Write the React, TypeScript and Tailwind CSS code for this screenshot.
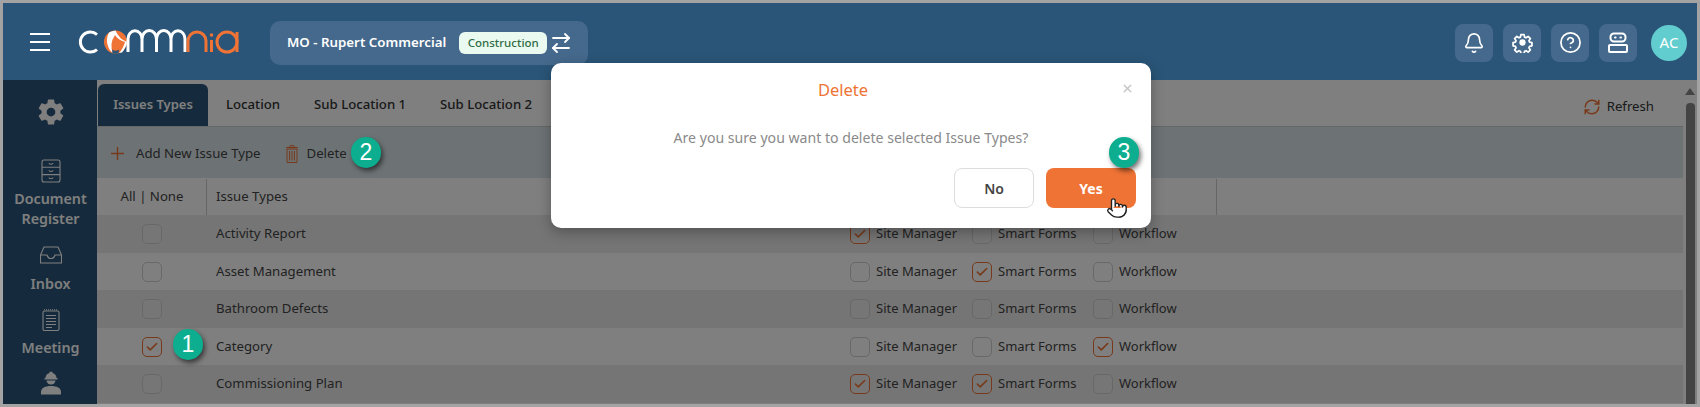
import React from "react";
import { Bell, CircleHelp, ArrowRightLeft, Pointer, Check, RefreshCw, X } from "lucide-react";
import { IoSettingsSharp } from "react-icons/io5";

function Logo() {
  return (
    <svg width="180" height="50" viewBox="0 0 180 50" className="shrink-0" fill="none" strokeWidth="3">
      <path d="M37 15.5 A10 10 0 1 0 37 30.5" stroke="#fff" />
      <circle cx="55.5" cy="23" r="11.5" fill="#ee7335" />
      <path d="M49 13.5 Q45.5 20 48 27 Q49.5 32 53 34 Q49 25 55 16 Q58 21 65 23 Q63 30 59 34 L62 33.5 Q66.5 28 67 23 Q59 20 55.5 11.5 Q52 12 49 13.5Z" fill="#fff" />
      <path d="M52 30.5 Q55.5 33 59 30.5 L58.5 34.5 H52.5Z" fill="#2a5578" />
      <path d="M68 33 V20 A5.5 6.5 0 0 1 82 20 V33 M82 20 A5.5 6.5 0 0 1 96.5 20 V33 M96.5 20 A5.5 6.5 0 0 1 111 20 V33 M111 20 A5.5 6.5 0 0 1 125 20 V33" stroke="#fff" />
      <path d="M128 33 V22 A8.5 8.5 0 0 1 146 22 V33" stroke="#ee7335" />
      <path d="M151.5 21 V33" stroke="#ee7335" />
      <circle cx="151.5" cy="16" r="1.8" fill="#ee7335" />
      <circle cx="167" cy="23" r="10" stroke="#ee7335" />
      <path d="M177 13 V33" stroke="#ee7335" />
    </svg>
  );
}

function BotIcon() {
  return (
    <svg width="22" height="22" viewBox="0 0 22 22" fill="none" stroke="#fff" strokeWidth="2">
      <rect x="3.5" y="1.5" width="15" height="8" rx="3.5" />
      <rect x="2" y="13" width="18" height="7" rx="1" />
      <path d="M8 5.5h.6M13.4 5.5h.6" strokeLinecap="round" />
    </svg>
  );
}

function GearIcon() {
  return (
    <svg width="21" height="21" viewBox="0 0 24 24" fill="none" stroke="#fff" strokeWidth="2.2" strokeLinejoin="round">
      <path d="M10 2h4l.6 3.2 1.9.8 2.7-1.8 2.8 2.8-1.8 2.7.8 1.9 3 .6v4l-3 .6-.8 1.9 1.8 2.7-2.8 2.8-2.7-1.8-1.9.8-.6 3h-4l-.6-3-1.9-.8-2.7 1.8-2.8-2.8 1.8-2.7-.8-1.9-3-.6v-4l3-.6.8-1.9-1.8-2.7 2.8-2.8 2.7 1.8 1.9-.8z" transform="translate(1.2 1.2) scale(.9)" />
      <circle cx="12" cy="12" r="3.6" fill="#fff" stroke="none" />
    </svg>
  );
}

function HeaderButton({ children }: { children: React.ReactNode }) {
  return <div className="flex h-[38px] w-[38px] items-center justify-center rounded-lg bg-[#45698c]">{children}</div>;
}

function CabinetIcon() {
  return (
    <svg width="20" height="24" viewBox="0 0 20 24" fill="none" stroke="#fff" strokeWidth="1.1">
      <rect x="1" y="1" width="18" height="22" rx="2" />
      <path d="M1 8.3h18M1 15.6h18M8 4q0 1.2 2 1.2T12 4M8 11.3q0 1.2 2 1.2t2-1.2M8 18.6q0 1.2 2 1.2t2-1.2" />
    </svg>
  );
}

function InboxIcon() {
  return (
    <svg width="22" height="18" viewBox="0 0 22 18" fill="none" stroke="#fff" strokeWidth="1.1" strokeLinejoin="round">
      <path d="M4 1h14l3.5 8v8h-21V9z" />
      <path d="M.5 9H7q1 3.5 4 3.5T15 9h6.5" />
    </svg>
  );
}

function MeetingIcon() {
  return (
    <svg width="18" height="22" viewBox="0 0 18 22" fill="none" stroke="#fff" strokeWidth="1.1">
      <rect x="1" y="2" width="16" height="19.5" rx="1.5" />
      <path d="M2 .8h14" strokeDasharray="1 1" />
      <path d="M4 6.5h10M4 9.5h10M4 12.5h10M4 15.5h10M4 18.5h6" />
    </svg>
  );
}

function WorkerIcon() {
  return (
    <svg width="20" height="24" viewBox="0 0 20 24" fill="#fff">
      <path d="M4.5 7A5.5 5.5 0 0 1 8.5 2V.8h3V2a5.5 5.5 0 0 1 4 5h1v1.5h-13V7z" />
      <path d="M5.5 9.5h9a4.5 4 0 0 1-9 0z" />
      <path d="M0 23.5v-2.5c0-4 4-6 10-6s10 2 10 6v2.5z" />
    </svg>
  );
}

function TrashIcon() {
  return (
    <svg width="14" height="18" viewBox="0 0 14 18" fill="none" stroke="#ee7335" strokeWidth="1">
      <path d="M2 4h10v13.5H2zM1 2.5h12M5 2.5V.7h4v1.8M4.6 6v9.5M7 6v9.5M9.4 6v9.5" />
    </svg>
  );
}

function Box({ on }: { on?: boolean }) {
  return (
    <span className={`flex h-5 w-5 shrink-0 items-center justify-center rounded-[5px] border-[1.5px] ${on ? "border-[#ee7335]" : "border-[#d0d0d0]"} bg-white/10`}>
      {on && <Check size={14} strokeWidth={2.8} className="text-[#ee7335]" />}
    </span>
  );
}

function Opt({ on, label, w }: { on?: boolean; label: string; w: string }) {
  return (
    <div className={`flex items-center gap-[6px] text-[13px] ${w}`}>
      <Box on={on} />
      <span>{label}</span>
    </div>
  );
}

function Marker({ n, className }: { n: number; className: string }) {
  return (
    <div className={`absolute z-30 flex h-[31px] w-[30px] items-center justify-center rounded-full bg-[#0cae8f] font-['Liberation_Sans',sans-serif] text-[23px] leading-none text-white shadow-[2px_3px_5px_rgba(0,0,0,0.55)] ${className}`}>
      {n}
    </div>
  );
}

const rows = [
  { name: "Activity Report", sel: false, a: true, b: false, c: false },
  { name: "Asset Management", sel: false, a: false, b: true, c: false },
  { name: "Bathroom Defects", sel: false, a: false, b: false, c: false },
  { name: "Category", sel: true, a: false, b: false, c: true },
  { name: "Commissioning Plan", sel: false, a: true, b: true, c: false },
];

export default function App() {
  return (
    <div className="relative h-[407px] w-[1700px] overflow-hidden bg-[#a3a3a3] pb-[3px] pl-[3px] pr-[3px] pt-[3px] font-['Noto_Sans','Open_Sans',sans-serif] text-[13.2px] text-[#444]">
      <div className="relative flex h-full flex-col bg-white">
        <header className="relative z-20 flex h-[77px] shrink-0 items-center bg-[#2a5578] pl-[27px] pr-[10px]">
          <div className="flex h-[18px] w-[20px] flex-col justify-between">
            <span className="h-[2px] bg-white" />
            <span className="h-[2px] bg-white" />
            <span className="h-[2px] bg-white" />
          </div>
          <div className="ml-[10px] mt-[4px]"><Logo /></div>
          <div className="ml-[30px] mt-[2px] flex h-[44px] w-[318px] items-center rounded-[10px] bg-[#45698c] pl-[17px]">
            <span className="text-[13.3px] font-semibold text-white">MO - Rupert Commercial</span>
            <span className="ml-[13px] flex h-[22px] w-[88px] items-center justify-center rounded-md bg-[#eafaf0] text-[11.5px] font-medium text-[#2f6b45]">Construction</span>
            <ArrowRightLeft size={24} strokeWidth={1.8} className="ml-[2px] text-white" />
          </div>
          <div className="ml-auto mt-[2px] flex items-center">
            <div className="flex gap-[10px]">
              <HeaderButton><Bell size={22} strokeWidth={1.8} className="text-white" /></HeaderButton>
              <HeaderButton><GearIcon /></HeaderButton>
              <HeaderButton><CircleHelp size={23} strokeWidth={1.8} className="text-white" /></HeaderButton>
              <HeaderButton><BotIcon /></HeaderButton>
            </div>
            <div className="ml-[14px] flex h-9 w-9 items-center justify-center rounded-full bg-[#62cdce] text-[15px] text-white">AC</div>
          </div>
        </header>

        <div className="relative flex min-h-0 flex-1">
          <aside className="flex w-[94px] shrink-0 flex-col items-center overflow-hidden bg-[#2a5578] pl-[1px] pt-[18px] text-center text-[14.3px] font-semibold leading-[20px] text-white">
            <IoSettingsSharp size={28} className="shrink-0 text-white" />
            <div className="mt-[33px]"><CabinetIcon /></div>
            <div className="mt-[6px]">Document<br />Register</div>
            <div className="mt-[17px] h-[18px]"><InboxIcon /></div>
            <div className="mt-[10px]">Inbox</div>
            <div className="mt-[15px] h-[22px]"><MeetingIcon /></div>
            <div className="mt-[7px]">Meeting</div>
            <div className="mt-[13px]"><WorkerIcon /></div>
          </aside>

          <main className="flex min-w-0 flex-1 flex-col">
            <div className="flex h-[47px] shrink-0 items-end border-b border-[#ccc] pl-[1px] pr-[14px] font-medium text-[#333]">
              <div className="flex h-[42px] w-[110px] items-center justify-center rounded-t-md bg-[#2a5578] text-[13px] font-semibold text-white">Issues Types</div>
              <div className="flex h-[42px] items-center">
                <span className="ml-[18px] w-[54px]">Location</span>
                <span className="ml-[34px] w-[94px]">Sub Location 1</span>
                <span className="ml-[32px] w-[94px]">Sub Location 2</span>
              </div>
              <div className="ml-auto flex h-[42px] items-center gap-[6px] pr-[29px] pt-[4px] font-normal">
                <RefreshCw size={18} className="text-[#ee7335]" />
                <span>Refresh</span>
              </div>
            </div>
            <div className="flex h-[51px] shrink-0 items-center bg-[#dae6ea] pl-[14px] pr-[14px] pt-[2px]">
              <svg width="13" height="13" viewBox="0 0 13 13" stroke="#ee7335" strokeWidth="1.4"><path d="M6.5 0v13M0 6.5h13" /></svg>
              <span className="ml-[12px]">Add New Issue Type</span>
              <span className="ml-[24px]"><TrashIcon /></span>
              <span className="ml-[8px]">Delete</span>
            </div>
            <div className="mr-[14px] flex h-[37px] shrink-0 items-center pt-[1px]">
              <div className="flex h-full w-[110px] items-center justify-center border-r border-[#ccc] pl-[1px]">All | None</div>
              <div className="flex h-full w-[1010px] items-center border-r border-[#ccc] pl-[9px]">Issue Types</div>
            </div>
            {rows.map((r, i) => (
              <div key={r.name} className={`mr-[14px] flex shrink-0 items-center ${i % 2 === 0 ? "h-[38px] bg-[#ebebeb]" : "h-[37px] bg-white"}`}>
                <div className="flex w-[110px] justify-center"><Box on={r.sel} /></div>
                <div className="w-[643px] pl-[9px]">{r.name}</div>
                <Opt on={r.a} label="Site Manager" w="w-[122px]" />
                <Opt on={r.b} label="Smart Forms" w="w-[121px]" />
                <Opt on={r.c} label="Workflow" w="" />
              </div>
            ))}
            <div className="absolute bottom-[0px] right-0 top-0 flex w-[14px] flex-col items-center bg-white pt-[8px]">
              <div className="h-0 w-0 border-x-[5px] border-b-[7px] border-x-transparent border-b-[#888]" />
              <div className="mt-[8px] w-[9px] flex-1 rounded-t bg-[#888]" />
            </div>
          </main>
          <div className="absolute inset-0 z-10 bg-black/50" />
        </div>

        <div className="absolute left-[548px] top-[60px] z-20 flex h-[165px] w-[600px] flex-col rounded-[10px] bg-white shadow-[0_4px_14px_rgba(0,0,0,0.3)]">
          <div className="relative flex h-[54px] items-center justify-center pr-[16px] text-[16.5px] text-[#ee7335]">
            Delete
            <X size={13} strokeWidth={2.6} className="absolute right-[17px] top-[19px] text-[#c4c4c4]" />
          </div>
          <p className="mt-[10px] text-center text-[14.1px] text-[#8a8a8a]">Are you sure you want to delete selected Issue Types?</p>
          <div className="mt-[20px] flex justify-end gap-[12px] pr-[15px]">
            <button className="h-10 w-20 rounded-lg border border-[#ddd] bg-white text-[14px] font-semibold text-[#444]">No</button>
            <button className="h-10 w-[90px] rounded-lg bg-[#ee7335] text-[14px] font-bold text-white">Yes</button>
          </div>
        </div>

        <Marker n={2} className="left-[348px] top-[134px]" />
        <Marker n={1} className="left-[170px] top-[326px]" />
        <Marker n={3} className="left-[1106px] top-[134px]" />
        <Pointer size={22} strokeWidth={1.5} fill="#fff" className="absolute left-[1103px] top-[194px] z-30 text-[#222]" />
      </div>
    </div>
  );
}
